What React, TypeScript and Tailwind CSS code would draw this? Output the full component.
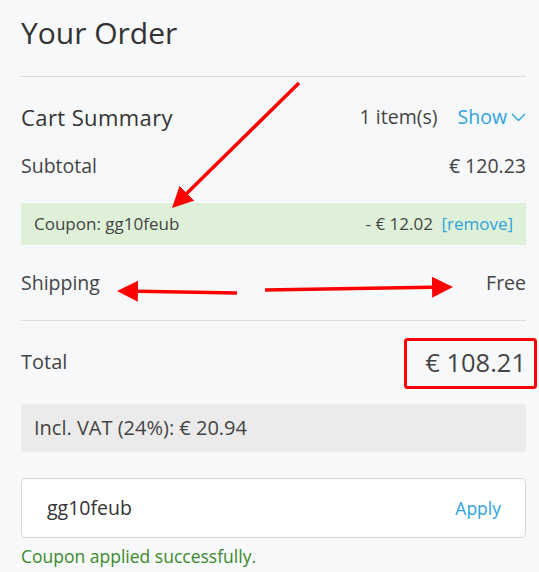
function Row({ label, value }: { label: string; value: string }) {
  return (
    <div className="flex h-[28px] items-center justify-between text-[19.5px] text-[#444]">
      <span>{label}</span>
      <span>{value}</span>
    </div>
  );
}

export default function App() {
  return (
    <div
      className="relative min-h-[572px] w-[539px] overflow-hidden bg-[#f7f8fa] pl-[21px] pr-[13px] text-[#3d3d3d]"
      style={{ fontFamily: "'Open Sans', 'Noto Sans', sans-serif" }}
    >
      <h1 className="pt-[14px] text-[30px] leading-[38px] text-[#333]">Your Order</h1>
      <div className="mt-[24px] border-t border-[#dcdcdc]" />

      <div className="mt-[26px] flex h-[28px] items-center justify-between">
        <span className="text-[22px] tracking-[0.4px] text-[#333]">Cart Summary</span>
        <div className="flex items-center gap-[20px] text-[19.5px]">
          <span className="text-[#444]">1 item(s)</span>
          <button className="flex items-center gap-[4px] text-[#2ea3dc]">
            Show
            <svg width="15" height="9" viewBox="0 0 15 9" fill="none">
              <path d="M1 1 L7.5 7.5 L14 1" stroke="#2ea3dc" strokeWidth="1.4" />
            </svg>
          </button>
        </div>
      </div>

      <div className="mt-[21px]">
        <Row label="Subtotal" value="€ 120.23" />
      </div>

      <div className="mt-[23px] flex h-[42px] items-center justify-between bg-[#dff0d8] px-[13px] text-[17px] text-[#444]">
        <span>Coupon: gg10feub</span>
        <span>
          - € 12.02 <span className="ml-[4px] text-[#2ea3dc]">[remove]</span>
        </span>
      </div>

      <div className="mt-[24px]">
        <Row label="Shipping" value="Free" />
      </div>

      <div className="mt-[23px] border-t border-[#dcdcdc]" />

      <div className="mt-[16px] flex h-[50px] items-center justify-between">
        <span className="text-[20px] text-[#444]">Total</span>
        <span className="text-[25.5px] text-[#444]">€ 108.21</span>
      </div>

      <div className="mt-[17px] flex h-[48px] items-center bg-[#ebebeb] px-[13px] text-[20px] text-[#444]">
        Incl. VAT (24%): € 20.94
      </div>

      <div className="mt-[26px] flex h-[60px] items-center justify-between rounded-[5px] border border-[#d6d6d6] bg-white pl-[25px] pr-[24px]">
        <span className="text-[19.5px] text-[#333]">gg10feub</span>
        <button className="text-[17.5px] text-[#2ea3dc]">Apply</button>
      </div>

      <p className="mt-[7px] h-[22px] text-[17.5px] leading-[22px] text-[#3b8a2c]">Coupon applied successfully.</p>

      <svg className="pointer-events-none absolute left-0 top-0" width="539" height="572">
        <defs>
          <marker id="head" markerWidth="6" markerHeight="6" refX="4" refY="3" orient="auto">
            <path d="M0,0 L6,3 L0,6 Z" fill="#f00" />
          </marker>
        </defs>
        <line x1="299" y1="83" x2="177" y2="203" stroke="#f00" strokeWidth="3.5" markerEnd="url(#head)" />
        <line x1="237" y1="293" x2="124" y2="291" stroke="#f00" strokeWidth="3.5" markerEnd="url(#head)" />
        <line x1="265" y1="290" x2="446" y2="287" stroke="#f00" strokeWidth="3.5" markerEnd="url(#head)" />
        <rect x="405.5" y="339.5" width="130" height="48" rx="2" fill="none" stroke="#f00" strokeWidth="3" />
      </svg>
    </div>
  );
}
